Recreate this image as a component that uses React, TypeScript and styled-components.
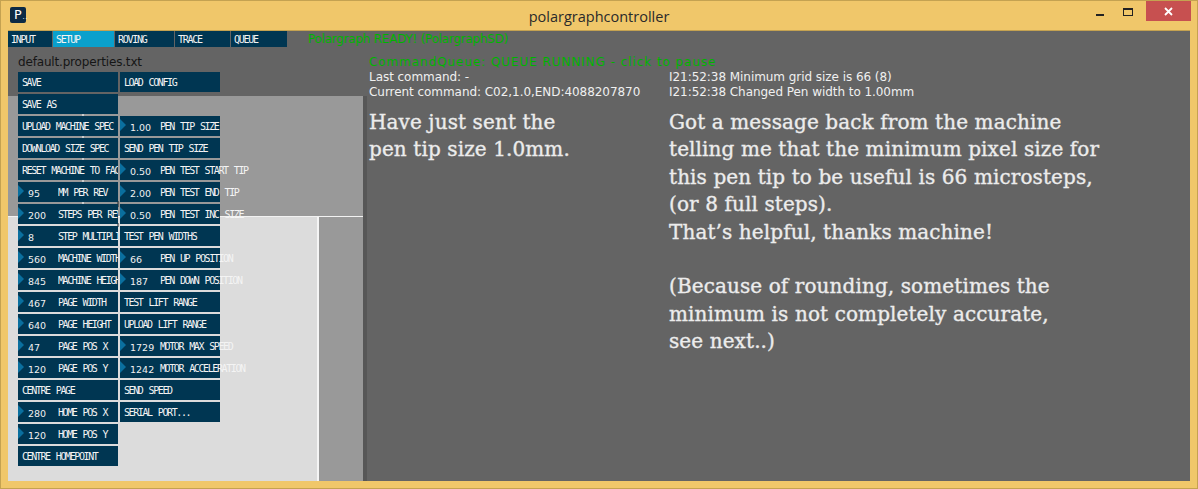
import styled, { createGlobalStyle } from "styled-components";

const tabs = [
    { name: "INPUT", width: 44 },
    { name: "SETUP", width: 61, active: true },
    { name: "ROVING", width: 59 },
    { name: "TRACE", width: 55 },
    { name: "QUEUE", width: 56 },
];

interface IControl {
    label?: string;
    value?: string;
}

const leftControls: IControl[] = [
    { label: "SAVE" },
    { label: "SAVE AS" },
    { label: "UPLOAD MACHINE SPEC" },
    { label: "DOWNLOAD SIZE SPEC" },
    { label: "RESET MACHINE TO FACT" },
    { value: "95", label: "MM PER REV" },
    { value: "200", label: "STEPS PER REV" },
    { value: "8", label: "STEP MULTIPLIER" },
    { value: "560", label: "MACHINE WIDTH" },
    { value: "845", label: "MACHINE HEIGHT" },
    { value: "467", label: "PAGE WIDTH" },
    { value: "640", label: "PAGE HEIGHT" },
    { value: "47", label: "PAGE POS X" },
    { value: "120", label: "PAGE POS Y" },
    { label: "CENTRE PAGE" },
    { value: "280", label: "HOME POS X" },
    { value: "120", label: "HOME POS Y" },
    { label: "CENTRE HOMEPOINT" },
];

const rightControls: IControl[] = [
    { label: "LOAD CONFIG" },
    {},
    { value: "1.00", label: "PEN TIP SIZE" },
    { label: "SEND PEN TIP SIZE" },
    { value: "0.50", label: "PEN TEST START TIP" },
    { value: "2.00", label: "PEN TEST END TIP" },
    { value: "0.50", label: "PEN TEST INC SIZE" },
    { label: "TEST PEN WIDTHS" },
    { value: "66", label: "PEN UP POSITION" },
    { value: "187", label: "PEN DOWN POSITION" },
    { label: "TEST LIFT RANGE" },
    { label: "UPLOAD LIFT RANGE" },
    { value: "1729", label: "MOTOR MAX SPEED" },
    { value: "1242", label: "MOTOR ACCELERATION" },
    { label: "SEND SPEED" },
    { label: "SERIAL PORT..." },
];

const ControlList = ({ items, clip }: { items: IControl[]; clip?: boolean }) => (
    <>
        {items.map((item, index) => {
            if (!item.label) return <Blank key={index} />;
            return (
                <Control key={index}>
                    {item.value && <Value>{item.value}</Value>}
                    <Label $offset={item.value ? 40 : 4} $clip={!!clip}>
                        {item.label}
                    </Label>
                </Control>
            );
        })}
    </>
);

const App = () => {
    return (
        <Window>
            <GlobalStyle />
            <TitleBar>
                <AppIcon>
                    P<small>..</small>
                </AppIcon>
                <Title>polargraphcontroller</Title>
                <WindowButtons>
                    <Minimize />
                    <Maximize />
                    <Close>
                        <svg width="9" height="9" viewBox="0 0 9 9">
                            <path d="M1 1l7 7M8 1l-7 7" stroke="#fff" strokeWidth="1.8" />
                        </svg>
                    </Close>
                </WindowButtons>
            </TitleBar>
            <Client>
                <MachineBack>
                    <MachineTop />
                    <MachineBottom>
                        <PageArea />
                        <MachineMargin />
                    </MachineBottom>
                    <MachineMarks width="355" height="385" viewBox="0 0 355 385">
                        <path d="M75 0v120" stroke="#fff" strokeWidth="1" />
                        <path d="M110 105v6M110 127v4M98 118h5M130 105h3M152 105h3" stroke="#222" strokeWidth="1" />
                    </MachineMarks>
                </MachineBack>
                <TopRow>
                    <Tabs>
                        {tabs.map((tab) => (
                            <Tab key={tab.name} $width={tab.width} $active={!!tab.active}>
                                {tab.name}
                            </Tab>
                        ))}
                    </Tabs>
                    <ReadyText>Polargraph READY! (PolargraphSD)</ReadyText>
                </TopRow>
                <Main>
                    <ControlsPane>
                        <FileName>default.properties.txt</FileName>
                        <ControlColumns>
                            <ControlColumn>
                                <ControlList items={leftControls} clip />
                            </ControlColumn>
                            <ControlColumn>
                                <ControlList items={rightControls} />
                            </ControlColumn>
                        </ControlColumns>
                    </ControlsPane>
                    <Divider />
                    <InfoPane>
                        <QueueText>CommandQueue: QUEUE RUNNING - click to pause</QueueText>
                        <InfoColumns>
                            <InfoColumn>
                                <ConsoleLine>Last command: -</ConsoleLine>
                                <ConsoleLine>Current command: C02,1.0,END:4088207870</ConsoleLine>
                                <Note>
                                    Have just sent the
                                    <br />
                                    pen tip size 1.0mm.
                                </Note>
                            </InfoColumn>
                            <InfoColumn>
                                <ConsoleLine>I21:52:38 Minimum grid size is 66 (8)</ConsoleLine>
                                <ConsoleLine>I21:52:38 Changed Pen width to 1.00mm</ConsoleLine>
                                <Note>
                                    Got a message back from the machine
                                    <br />
                                    telling me that the minimum pixel size for
                                    <br />
                                    this pen tip to be useful is 66 microsteps,
                                    <br />
                                    (or 8 full steps).
                                    <br />
                                    That’s helpful, thanks machine!
                                    <br />
                                    <br />
                                    (Because of rounding, sometimes the
                                    <br />
                                    minimum is not completely accurate,
                                    <br />
                                    see next..)
                                </Note>
                            </InfoColumn>
                        </InfoColumns>
                    </InfoPane>
                </Main>
            </Client>
        </Window>
    );
};

export default App;

const GlobalStyle = createGlobalStyle`
    html, body {
        margin: 0;
        padding: 0;
        background: #f0c76a;
    }
`;

const Window = styled.div`
    box-sizing: border-box;
    width: 1198px;
    height: 489px;
    padding: 0 7px 7px;
    display: flex;
    flex-direction: column;
    background: #f0c76a;
    border: 1px solid #c4a251;
    overflow: hidden;
`;

const TitleBar = styled.div`
    position: relative;
    flex: 0 0 29px;
    display: flex;
    align-items: center;
    justify-content: center;
`;

const AppIcon = styled.div`
    position: absolute;
    left: 2px;
    top: 6px;
    width: 16px;
    height: 16px;
    border-radius: 2px;
    background: #0d2b45;
    color: #fff;
    font: 13px/16px "DejaVu Sans Mono", monospace;
    text-align: left;
    padding-left: 4px;
    box-sizing: border-box;
    small {
        font-size: 6px;
        letter-spacing: -1px;
    }
`;

const Title = styled.div`
    font: 14.5px "Open Sans", sans-serif;
    color: #2a2a2a;
    margin-top: 1px;
`;

const WindowButtons = styled.div`
    position: absolute;
    right: -1px;
    top: 0;
    display: flex;
    align-items: flex-start;
`;

const Minimize = styled.div`
    width: 8px;
    height: 2px;
    margin: 13px 19px 0 0;
    background: #222;
`;

const Maximize = styled.div`
    box-sizing: border-box;
    width: 10px;
    height: 8px;
    margin: 7px 13px 0 0;
    border: 1px solid #222;
    border-top-width: 2px;
`;

const Close = styled.div`
    width: 45px;
    height: 20px;
    display: flex;
    align-items: center;
    justify-content: center;
    background: #c75050;
`;

const Client = styled.div`
    position: relative;
    flex: 1;
    background: #646464;
    border-top: 1px solid #c4a251;
`;

const MachineBack = styled.div`
    position: absolute;
    left: 0;
    top: 65px;
    bottom: 0;
    width: 355px;
    display: flex;
    flex-direction: column;
`;

const MachineTop = styled.div`
    flex: 0 0 120px;
    background: #999999;
    border-bottom: 1px solid #f2f2f2;
`;

const MachineBottom = styled.div`
    flex: 1;
    display: flex;
`;

const PageArea = styled.div`
    width: 309px;
    background: #dcdcdc;
    border-right: 2px solid #f5f5f5;
`;

const MachineMargin = styled.div`
    flex: 1;
    background: #999999;
`;

const MachineMarks = styled.svg`
    position: absolute;
    left: 0;
    top: 0;
`;

const TopRow = styled.div`
    position: relative;
    display: flex;
    align-items: center;
    height: 16px;
`;

const Tabs = styled.div`
    display: flex;
    gap: 1px;
`;

const Tab = styled.div<{ $width: number; $active: boolean }>`
    box-sizing: border-box;
    width: ${(props) => props.$width}px;
    height: 16px;
    padding-left: 3px;
    background: ${(props) => (props.$active ? "#0aa0cc" : "#003652")};
    color: #f4f4f4;
    font: 10px/17px "DejaVu Sans Mono", monospace;
    letter-spacing: -1.25px;
`;

const ReadyText = styled.div`
    margin-left: 21px;
    color: #00b400;
    font: 12px "DejaVu Sans", sans-serif;
    letter-spacing: -0.25px;
`;

const Main = styled.div`
    position: relative;
    display: flex;
`;

const ControlsPane = styled.div`
    box-sizing: border-box;
    width: 355px;
    padding: 5px 0 0 10px;
`;

const FileName = styled.div`
    height: 20px;
    color: #161616;
    font: 12px/20px "DejaVu Sans", sans-serif;
    letter-spacing: -0.17px;
`;

const ControlColumns = styled.div`
    display: flex;
    gap: 2px;
`;

const ControlColumn = styled.div`
    position: relative;
    width: 100px;
    display: flex;
    flex-direction: column;
    gap: 2px;
`;

const Blank = styled.div`
    height: 20px;
`;

const Control = styled.div`
    position: relative;
    height: 20px;
    background: #003652;
    &:has(> span:nth-child(2))::before {
        content: "";
        position: absolute;
        left: 0;
        top: 3px;
        border-left: 6px solid #0a6f9e;
        border-top: 6px solid transparent;
        border-bottom: 6px solid transparent;
    }
`;

const Value = styled.span`
    position: absolute;
    left: 10px;
    top: 5px;
    color: #f0f0f0;
    font: 9.5px/13px "DejaVu Sans", sans-serif;
`;

const Label = styled.span<{ $offset: number; $clip: boolean }>`
    position: absolute;
    left: ${(props) => props.$offset}px;
    top: 0;
    ${(props) => (props.$clip ? "right: 0; overflow: hidden;" : "")}
    color: #f4f4f4;
    font: 10px/21px "DejaVu Sans Mono", monospace;
    letter-spacing: -1.4px;
    word-spacing: 1.5px;
    white-space: nowrap;
`;

const Divider = styled.div`
    flex: 0 0 4px;
    height: 385px;
    margin-top: 49px;
    background: #575757;
`;

const InfoPane = styled.div`
    flex: 1;
    padding: 8px 0 0 2px;
`;

const QueueText = styled.div`
    height: 15px;
    color: #00b400;
    font: 12px/15px "DejaVu Sans", sans-serif;
    letter-spacing: 0.93px;
`;

const InfoColumns = styled.div`
    display: grid;
    grid-template-columns: 300px 1fr;
`;

const InfoColumn = styled.div`
    min-width: 0;
`;

const ConsoleLine = styled.div`
    height: 15px;
    color: #f0f0f0;
    font: 12px/15px "DejaVu Sans", sans-serif;
    letter-spacing: -0.05px;
    white-space: nowrap;
`;

const Note = styled.div`
    margin-top: 9px;
    color: #ececec;
    font: 20px/27.4px "DejaVu Serif", serif;
    letter-spacing: 0.1px;
    -webkit-text-stroke: 0.35px #ececec;
    white-space: nowrap;
`;
